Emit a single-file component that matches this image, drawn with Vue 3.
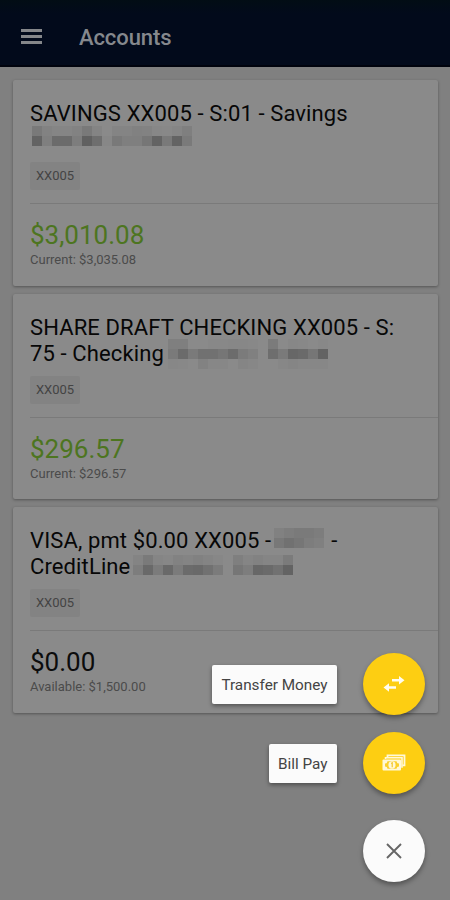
<template>
  <div class="screen">
    <header class="toolbar">
      <div class="menu-icon"><i></i><i></i><i></i></div>
      <h1>Accounts</h1>
    </header>

    <main class="account-list">
      <section v-for="account in accounts" :key="account.id" class="card">
        <div class="card-head">
          <h2>
            <div v-for="(line, i) in account.title" :key="i" class="title-line">
              <template v-for="(part, j) in line" :key="j">
                <span v-if="typeof part === 'string'">{{ part }}</span>
                <svg
                  v-else
                  class="mask"
                  :class="part.name"
                  :width="part.rows[0].length * 10"
                  :height="part.rows.length * 10"
                  shape-rendering="crispEdges"
                >
                  <template v-for="(row, y) in part.rows" :key="y">
                    <rect
                      v-for="(level, x) in row"
                      :key="x"
                      :x="x * 10"
                      :y="y * 10"
                      width="10"
                      height="10"
                      :fill-opacity="level / 100"
                    />
                  </template>
                </svg>
              </template>
            </div>
          </h2>
          <span class="chip">XX005</span>
        </div>
        <div class="card-body">
          <div class="amount" :class="{ positive: account.positive }">
            <span>{{ account.amount }}</span>
          </div>
          <div class="detail">{{ account.detail }}</div>
        </div>
      </section>
    </main>

    <div class="speed-dial">
      <div class="dial-row">
        <span class="dial-label">Transfer Money</span>
        <button class="fab">
          <svg width="24" height="18" viewBox="0 0 24 18" fill="#fffdf0">
            <path d="M10 4h7V1l5.500 4.200-5.500 4.200V6.600h-7z" />
            <path d="M14 11.200H7v-3L1.500 12.500 7 16.800v-3h7z" />
          </svg>
        </button>
      </div>
      <div class="dial-row">
        <span class="dial-label">Bill Pay</span>
        <button class="fab">
          <svg width="24" height="18" viewBox="0 0 24 18">
            <path d="M5.500 3V1.300h17v10h-2" fill="none" stroke="#fff8d8" stroke-width="1.800" />
            <path d="M3.500 5V3.800h16.500v10" fill="none" stroke="#fff8d8" stroke-width="1.600" />
            <rect x="0.500" y="5.500" width="18.500" height="11" rx="1" fill="#fff8d8" />
            <path
              d="M5.500 7.300h9a2.500 2.500 0 0 0 2.500 2.200v3a2.500 2.500 0 0 0-2.500 2.300h-9A2.500 2.500 0 0 0 3 12.500v-3a2.500 2.500 0 0 0 2.500-2.200z"
              fill="#fbd02c"
            />
            <ellipse cx="10" cy="11" rx="3.600" ry="3.700" fill="#fff8d8" />
            <path d="M9.200 9.500l1-.7v4.400" fill="none" stroke="#f2c21c" stroke-width="1.100" />
          </svg>
        </button>
      </div>
      <button class="fab close">
        <svg width="18" height="18" viewBox="0 0 18 18">
          <path d="M2 2l14 14M16 2L2 16" fill="none" stroke="#666" stroke-width="1.900" />
        </svg>
      </button>
    </div>
  </div>
</template>

<script setup>
// masked names: one number per mosaic cell, percent of darkness
const accounts = [
  {
    id: 1,
    title: [
      ['SAVINGS XX005 - S:01 - Savings'],
      [{
        name: 'mask-savings',
        rows: [
          [12, 5, 3, 3, 5, 12, 4, 0, 4, 4, 6, 5, 2, 1, 3, 8],
          [28, 8, 22, 22, 9, 30, 20, 2, 12, 8, 8, 14, 28, 12, 28, 11],
        ],
      }],
    ],
    amount: '$3,010.08',
    detail: 'Current: $3,035.08',
    positive: true,
  },
  {
    id: 2,
    title: [
      ['SHARE DRAFT CHECKING XX005 - S:'],
      ['75 - Checking', {
        name: 'mask-checking',
        rows: [
          [8, 8, 0, 0, 1, 1, 2, 2, 1, 0, 10, 0, 2, 1, 0, 1],
          [11, 22, 11, 18, 18, 14, 21, 10, 7, 0, 20, 11, 25, 23, 14, 28],
          [2, 1, 0, 5, 2, 2, 0, 3, 2, 0, 0, 2, 3, 2, 2, 2],
        ],
      }],
    ],
    amount: '$296.57',
    detail: 'Current: $296.57',
    positive: true,
  },
  {
    id: 3,
    title: [
      ['VISA, pmt $0.00 XX005 -', {
        name: 'mask-number',
        rows: [
          [6, 9, 11, 11, 9],
          [13, 18, 14, 9, 7],
        ],
      }, '-'],
      ['CreditLine', {
        name: 'mask-credit',
        rows: [
          [4, 11, 3, 2, 5, 4, 6, 4, 2, 0, 8, 3, 5, 3, 3, 10],
          [9, 24, 10, 24, 10, 22, 24, 18, 10, 0, 14, 9, 25, 23, 18, 28],
        ],
      }],
    ],
    amount: '$0.00',
    detail: 'Available: $1,500.00',
    positive: false,
  },
]
</script>

<style>
body {
  margin: 0;
  background: #808080;
}
</style>

<style scoped>
.screen {
  width: 450px;
  height: 900px;
  overflow: hidden;
  position: relative;
  background: #808080;
  font-family: Roboto, "Liberation Sans", sans-serif;
}

.toolbar {
  height: 67px;
  box-sizing: border-box;
  padding: 8px 20px 0 21px;
  display: flex;
  align-items: center;
  gap: 37px;
  background: linear-gradient(#020d14, #020a1b 14px);
  border-bottom: 2px solid #00030d;
}

.menu-icon {
  width: 21px;
  display: flex;
  flex-direction: column;
  gap: 3px;
}

.menu-icon i {
  height: 3px;
  background: #85878a;
}

.toolbar h1 {
  margin: 2px 0 0;
  font-size: 22px;
  font-weight: 500;
  line-height: 26px;
  letter-spacing: -0.1px;
  color: #85888d;
}

.account-list {
  padding: 13px 12px 0 13px;
  display: flex;
  flex-direction: column;
  gap: 8px;
}

.card {
  height: 205.700px;
  box-sizing: border-box;
  padding-left: 17px;
  border-radius: 2px;
  background: #8a8a8a;
  box-shadow: 0 1px 3px rgba(0, 0, 0, 0.35);
}

.card-head {
  height: 124px;
  box-sizing: border-box;
  padding-top: 20px;
  border-bottom: 1px solid #7a7a7a;
}

.card h2 {
  margin: 0 0 10px;
  font-size: 22px;
  font-weight: 400;
  letter-spacing: 0.120px;
  color: #070707;
}

.title-line {
  height: 26px;
  line-height: 27px;
  display: flex;
  white-space: nowrap;
}

.mask {
  flex: none;
}

.mask-savings {
  margin-left: 2px;
}

.mask-checking {
  margin: -1px 0 0 4px;
}

.mask-number {
  margin: 1px 7px 0 3px;
}

.mask-credit {
  margin: 2px 0 0 3px;
}

.chip {
  display: block;
  width: 50px;
  height: 28px;
  line-height: 28px;
  border-radius: 2px;
  background: #838383;
  font-size: 13px;
  text-align: center;
  color: #444;
}

.card-body {
  padding-top: 15px;
}

.amount {
  height: 31px;
  line-height: 32px;
  font-size: 26px;
  color: #0c0c0c;
}

.amount.positive {
  color: #4d7520;
}

.detail {
  line-height: 20px;
  font-size: 13px;
  color: #4b4b4b;
}

.speed-dial {
  position: absolute;
  right: 25.500px;
  bottom: 18px;
  display: flex;
  flex-direction: column;
  align-items: flex-end;
}

.dial-row {
  display: flex;
  align-items: center;
  gap: 26px;
  margin-bottom: 17px;
}

.dial-row + .dial-row {
  margin-bottom: 26px;
}

.dial-label {
  height: 39px;
  line-height: 40px;
  padding: 0 9px;
  border-radius: 2px;
  background: #fbfbfb;
  font-size: 15.300px;
  color: #444;
  box-shadow: 0 2px 4px rgba(0, 0, 0, 0.4);
}

.fab {
  width: 62px;
  height: 62px;
  padding: 0;
  border: 0;
  border-radius: 50%;
  display: flex;
  align-items: center;
  justify-content: center;
  background: #fdce12;
  box-shadow: 0 3px 5px rgba(0, 0, 0, 0.35);
}

.fab.close {
  background: #fbfbfb;
}
</style>
